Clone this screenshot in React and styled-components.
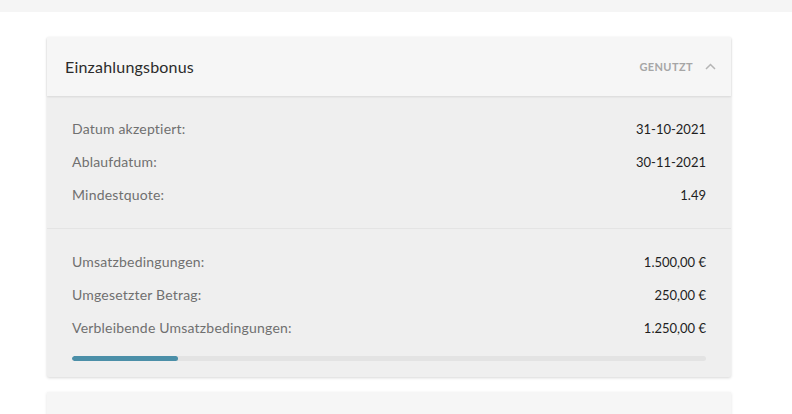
import React from "react";
import styled, { createGlobalStyle } from "styled-components";

const Global = createGlobalStyle`
  html, body { margin: 0; padding: 0; background: #fff; }
  body { font-family: "Lato", "Liberation Sans", sans-serif; }
`;

const TopBar = styled.div`
  height: 12px;
  background: #f5f5f5;
`;

const Page = styled.main`
  padding: 25px 61px 0 47px;
  display: flex;
  flex-direction: column;
  gap: 15px;
`;

const Card = styled.section`
  background: #efefef;
  box-shadow: 0 1px 3px rgba(0, 0, 0, 0.16);
  border-radius: 2px;
`;

const Header = styled.div`
  height: 59px;
  background: #f6f6f6;
  display: flex;
  align-items: center;
  padding: 0 15px 0 18px;
  box-shadow: 0 1px 2px rgba(0, 0, 0, 0.1);
  position: relative;
`;

const Title = styled.h2`
  flex: 1;
  margin: 0;
  font-size: 16px;
  font-weight: 400;
  letter-spacing: 0.2px;
  color: #2b2b2b;
`;

const Status = styled.span`
  font-size: 11px;
  font-weight: 700;
  letter-spacing: 0.4px;
  color: #a6a6a6;
  margin-right: 12px;
`;

const Section = styled.div`
  padding: ${(p) => p.$pad};
  display: flex;
  flex-direction: column;
  gap: 15px;
  & + & { border-top: 1px solid #e4e4e4; }
`;

const Row = styled.div`
  display: flex;
  justify-content: space-between;
  align-items: baseline;
  line-height: 18px;
`;

const Label = styled.span`
  font-size: 14px;
  letter-spacing: 0.2px;
  color: #707070;
`;

const Value = styled.span`
  font-size: 13px;
  color: #1e1e1e;
`;

const Track = styled.div`
  height: 5px;
  border-radius: 3px;
  background: #e3e3e3;
  margin-top: 4px;
  overflow: hidden;
`;

const Fill = styled.div`
  height: 100%;
  border-radius: 3px;
  background: #4b8fa8;
`;

const NextCard = styled.div`
  height: 40px;
  background: #f6f6f6;
  box-shadow: 0 1px 3px rgba(0, 0, 0, 0.12);
`;

const Chevron = () => (
  <svg width="11" height="7" viewBox="0 0 11 7" fill="none">
    <path d="M1 6 L5.5 1.5 L10 6" stroke="#b5b5b5" strokeWidth="1.5" />
  </svg>
);

export default function App() {
  const first = [
    ["Datum akzeptiert:", "31-10-2021"],
    ["Ablaufdatum:", "30-11-2021"],
    ["Mindestquote:", "1.49"],
  ];
  const second = [
    ["Umsatzbedingungen:", "1.500,00 €"],
    ["Umgesetzter Betrag:", "250,00 €"],
    ["Verbleibende Umsatzbedingungen:", "1.250,00 €"],
  ];
  return (
    <>
      <Global />
      <TopBar />
      <Page>
        <Card>
          <Header>
            <Title>Einzahlungsbonus</Title>
            <Status>GENUTZT</Status>
            <Chevron />
          </Header>
          <Section $pad="24px 25px 24px 25px">
            {first.map(([l, v]) => (
              <Row key={l}>
                <Label>{l}</Label>
                <Value>{v}</Value>
              </Row>
            ))}
          </Section>
          <Section $pad="24px 25px 16px 25px">
            {second.map(([l, v]) => (
              <Row key={l}>
                <Label>{l}</Label>
                <Value>{v}</Value>
              </Row>
            ))}
            <Track>
              <Fill style={{ width: `${(250 / 1500) * 100}%` }} />
            </Track>
          </Section>
        </Card>
        <NextCard />
      </Page>
    </>
  );
}
